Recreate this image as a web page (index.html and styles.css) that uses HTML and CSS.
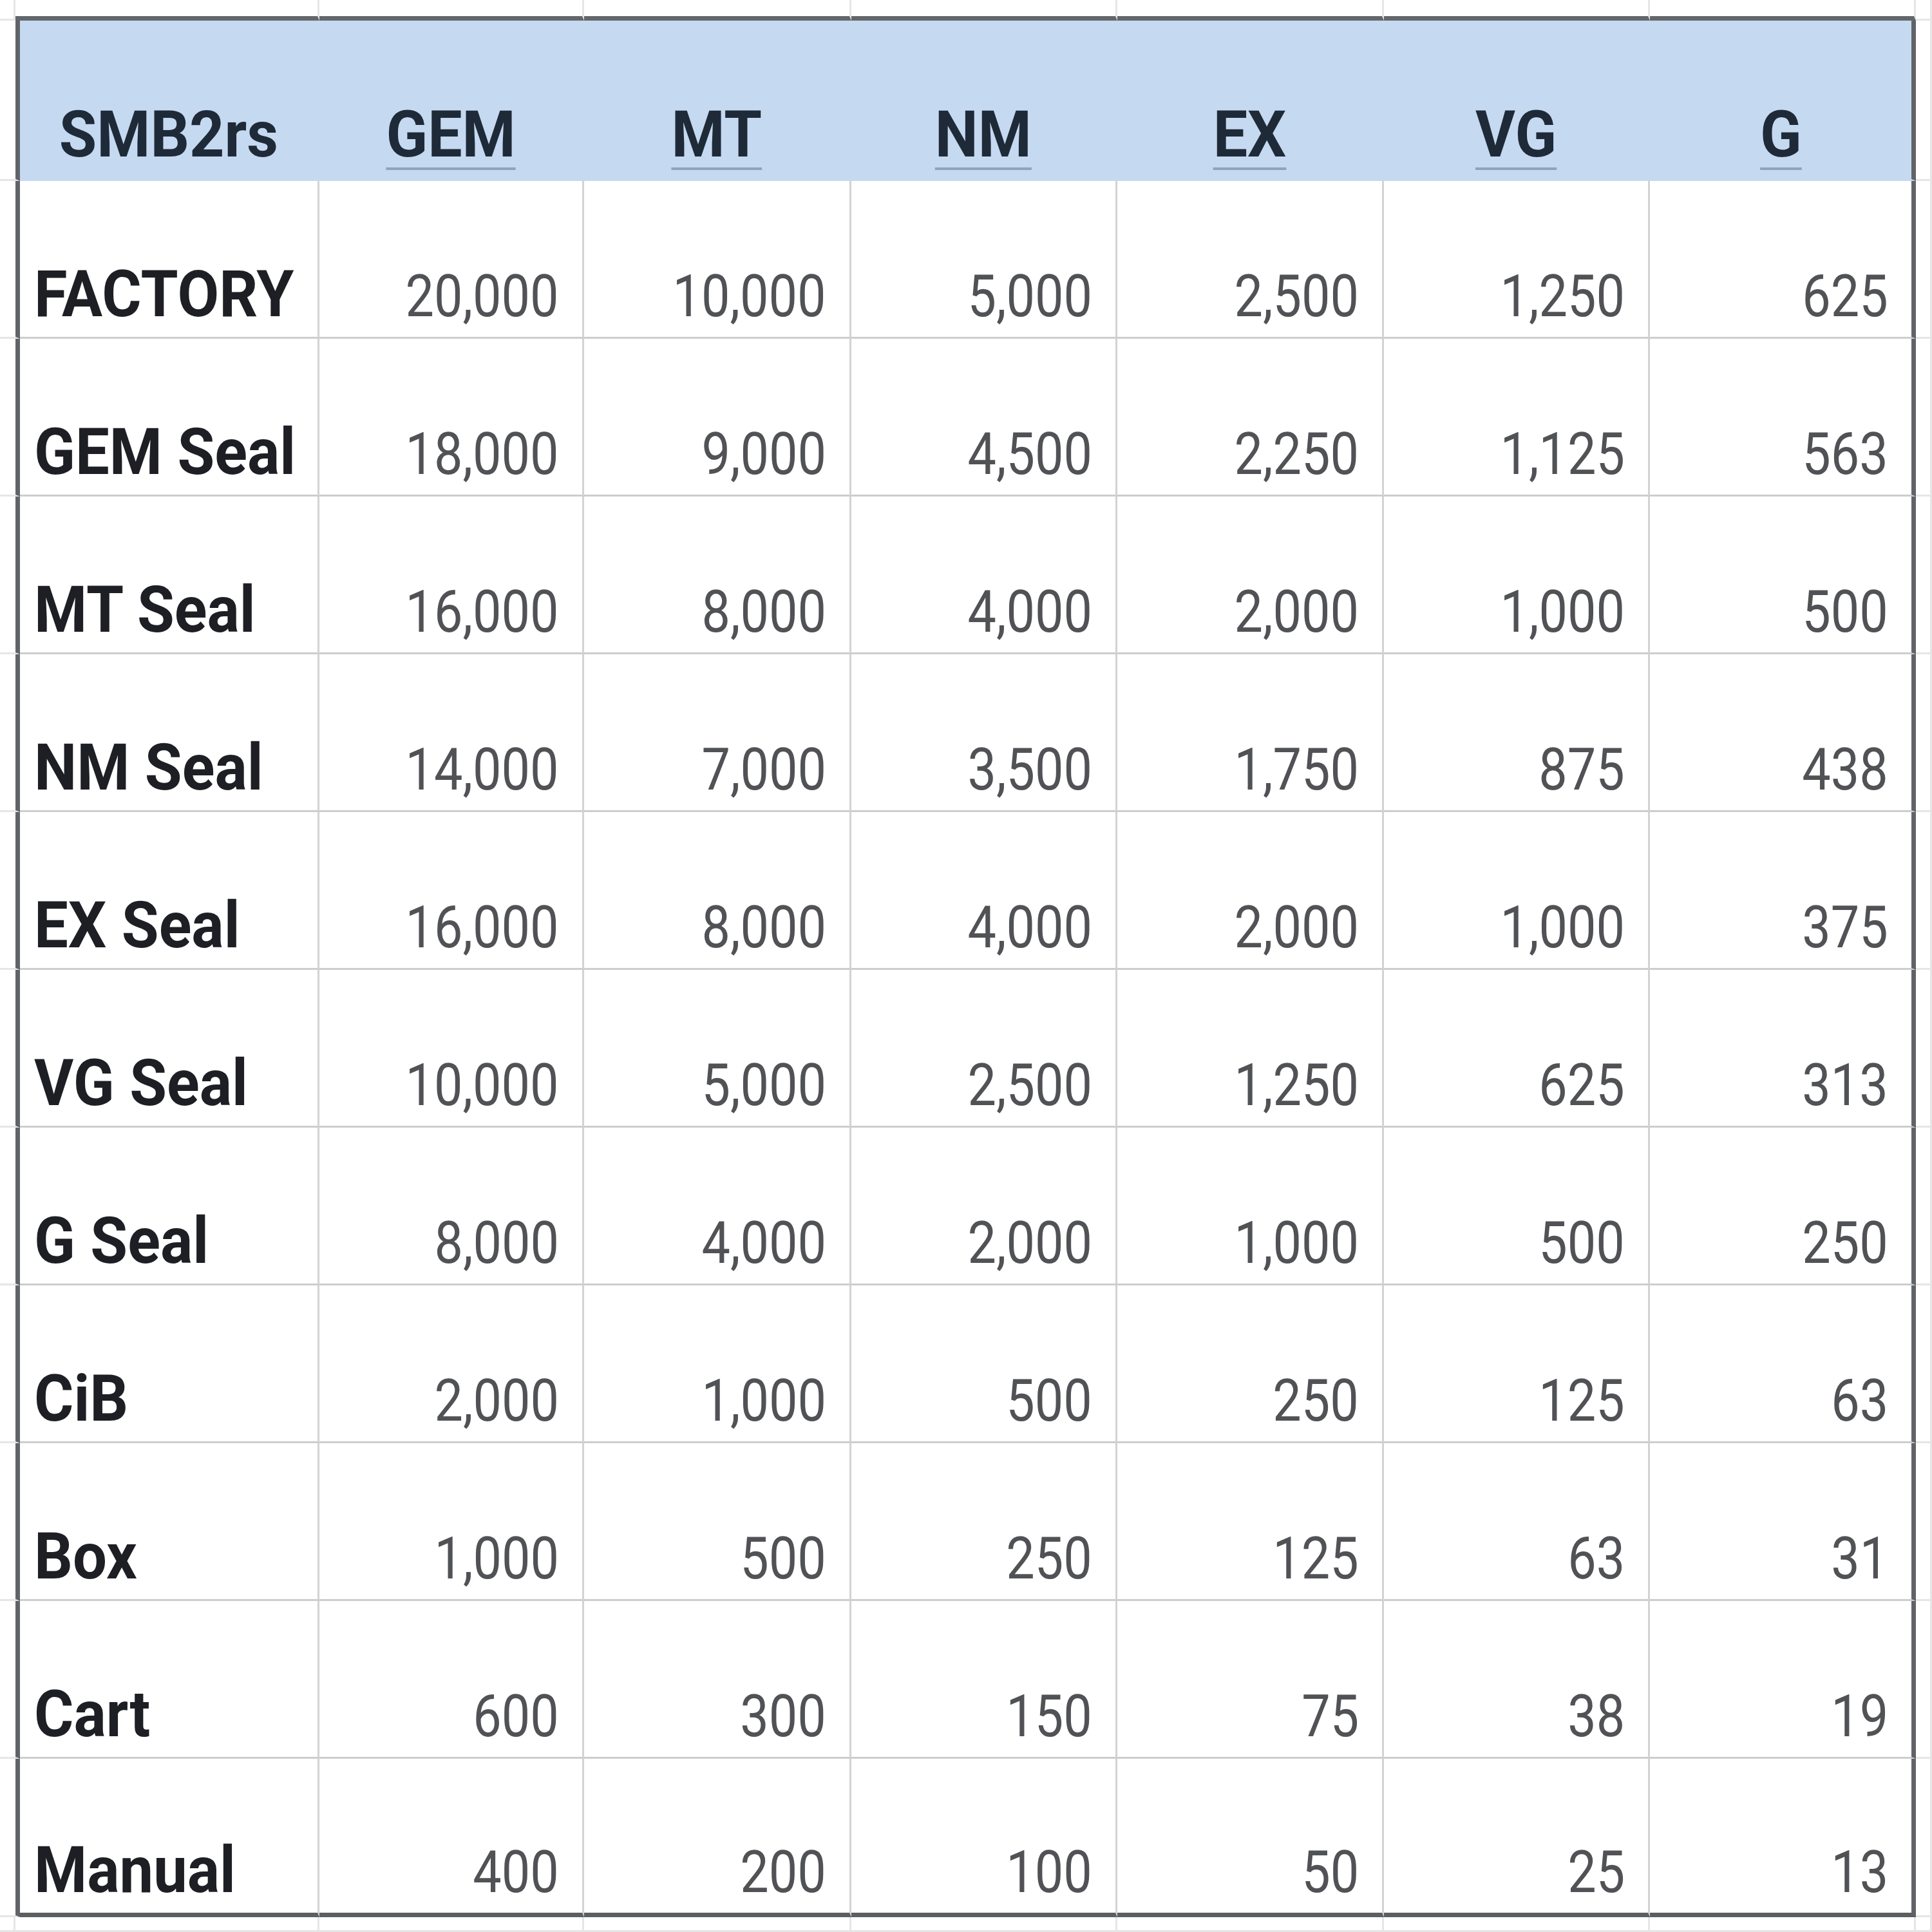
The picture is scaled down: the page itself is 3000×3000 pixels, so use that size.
FILE: index.html
```html
<!DOCTYPE html>
<html lang="en">
<head>
<meta charset="utf-8">
<title>SMB2rs price grid</title>
<link rel="stylesheet" href="styles.css">
</head>
<body>
<div class="sheet">
  <div class="row r-gtop">
    <div class="cell g gw0"></div>
    <div class="cell g gtop gw1"></div>
    <div class="cell g gtop w2"></div>
    <div class="cell g gtop w3"></div>
    <div class="cell g gtop w4"></div>
    <div class="cell g gtop w5"></div>
    <div class="cell g gtop w6"></div>
    <div class="cell g gtop w7"></div>
    <div class="cell g grest"></div>
  </div>

  <div class="row r-head">
    <div class="cell g gleft"></div>
    <div class="cell h w1"><span class="t">SMB2rs</span></div>
    <div class="cell h w2"><span class="t u">GEM</span></div>
    <div class="cell h w3"><span class="t u">MT</span></div>
    <div class="cell h w4"><span class="t u">NM</span></div>
    <div class="cell h w5"><span class="t u">EX</span></div>
    <div class="cell h w6"><span class="t u">VG</span></div>
    <div class="cell h w7 last"><span class="t u">G</span></div>
    <div class="cell g grest"></div>
  </div>

  <div class="row r-data">
    <div class="cell g gleft"></div>
    <div class="cell d w1 name"><span class="t">FACTORY</span></div>
    <div class="cell d w2 num"><span class="t">20,000</span></div>
    <div class="cell d w3 num"><span class="t">10,000</span></div>
    <div class="cell d w4 num"><span class="t">5,000</span></div>
    <div class="cell d w5 num"><span class="t">2,500</span></div>
    <div class="cell d w6 num"><span class="t">1,250</span></div>
    <div class="cell d w7 num last"><span class="t">625</span></div>
    <div class="cell g grest"></div>
  </div>

  <div class="row r-data">
    <div class="cell g gleft"></div>
    <div class="cell d w1 name"><span class="t">GEM Seal</span></div>
    <div class="cell d w2 num"><span class="t">18,000</span></div>
    <div class="cell d w3 num"><span class="t">9,000</span></div>
    <div class="cell d w4 num"><span class="t">4,500</span></div>
    <div class="cell d w5 num"><span class="t">2,250</span></div>
    <div class="cell d w6 num"><span class="t">1,125</span></div>
    <div class="cell d w7 num last"><span class="t">563</span></div>
    <div class="cell g grest"></div>
  </div>

  <div class="row r-data">
    <div class="cell g gleft"></div>
    <div class="cell d w1 name"><span class="t">MT Seal</span></div>
    <div class="cell d w2 num"><span class="t">16,000</span></div>
    <div class="cell d w3 num"><span class="t">8,000</span></div>
    <div class="cell d w4 num"><span class="t">4,000</span></div>
    <div class="cell d w5 num"><span class="t">2,000</span></div>
    <div class="cell d w6 num"><span class="t">1,000</span></div>
    <div class="cell d w7 num last"><span class="t">500</span></div>
    <div class="cell g grest"></div>
  </div>

  <div class="row r-data">
    <div class="cell g gleft"></div>
    <div class="cell d w1 name"><span class="t">NM Seal</span></div>
    <div class="cell d w2 num"><span class="t">14,000</span></div>
    <div class="cell d w3 num"><span class="t">7,000</span></div>
    <div class="cell d w4 num"><span class="t">3,500</span></div>
    <div class="cell d w5 num"><span class="t">1,750</span></div>
    <div class="cell d w6 num"><span class="t">875</span></div>
    <div class="cell d w7 num last"><span class="t">438</span></div>
    <div class="cell g grest"></div>
  </div>

  <div class="row r-data">
    <div class="cell g gleft"></div>
    <div class="cell d w1 name"><span class="t">EX Seal</span></div>
    <div class="cell d w2 num"><span class="t">16,000</span></div>
    <div class="cell d w3 num"><span class="t">8,000</span></div>
    <div class="cell d w4 num"><span class="t">4,000</span></div>
    <div class="cell d w5 num"><span class="t">2,000</span></div>
    <div class="cell d w6 num"><span class="t">1,000</span></div>
    <div class="cell d w7 num last"><span class="t">375</span></div>
    <div class="cell g grest"></div>
  </div>

  <div class="row r-data">
    <div class="cell g gleft"></div>
    <div class="cell d w1 name"><span class="t">VG Seal</span></div>
    <div class="cell d w2 num"><span class="t">10,000</span></div>
    <div class="cell d w3 num"><span class="t">5,000</span></div>
    <div class="cell d w4 num"><span class="t">2,500</span></div>
    <div class="cell d w5 num"><span class="t">1,250</span></div>
    <div class="cell d w6 num"><span class="t">625</span></div>
    <div class="cell d w7 num last"><span class="t">313</span></div>
    <div class="cell g grest"></div>
  </div>

  <div class="row r-data">
    <div class="cell g gleft"></div>
    <div class="cell d w1 name"><span class="t">G Seal</span></div>
    <div class="cell d w2 num"><span class="t">8,000</span></div>
    <div class="cell d w3 num"><span class="t">4,000</span></div>
    <div class="cell d w4 num"><span class="t">2,000</span></div>
    <div class="cell d w5 num"><span class="t">1,000</span></div>
    <div class="cell d w6 num"><span class="t">500</span></div>
    <div class="cell d w7 num last"><span class="t">250</span></div>
    <div class="cell g grest"></div>
  </div>

  <div class="row r-data">
    <div class="cell g gleft"></div>
    <div class="cell d w1 name"><span class="t">CiB</span></div>
    <div class="cell d w2 num"><span class="t">2,000</span></div>
    <div class="cell d w3 num"><span class="t">1,000</span></div>
    <div class="cell d w4 num"><span class="t">500</span></div>
    <div class="cell d w5 num"><span class="t">250</span></div>
    <div class="cell d w6 num"><span class="t">125</span></div>
    <div class="cell d w7 num last"><span class="t">63</span></div>
    <div class="cell g grest"></div>
  </div>

  <div class="row r-data">
    <div class="cell g gleft"></div>
    <div class="cell d w1 name"><span class="t">Box</span></div>
    <div class="cell d w2 num"><span class="t">1,000</span></div>
    <div class="cell d w3 num"><span class="t">500</span></div>
    <div class="cell d w4 num"><span class="t">250</span></div>
    <div class="cell d w5 num"><span class="t">125</span></div>
    <div class="cell d w6 num"><span class="t">63</span></div>
    <div class="cell d w7 num last"><span class="t">31</span></div>
    <div class="cell g grest"></div>
  </div>

  <div class="row r-data">
    <div class="cell g gleft"></div>
    <div class="cell d w1 name"><span class="t">Cart</span></div>
    <div class="cell d w2 num"><span class="t">600</span></div>
    <div class="cell d w3 num"><span class="t">300</span></div>
    <div class="cell d w4 num"><span class="t">150</span></div>
    <div class="cell d w5 num"><span class="t">75</span></div>
    <div class="cell d w6 num"><span class="t">38</span></div>
    <div class="cell d w7 num last"><span class="t">19</span></div>
    <div class="cell g grest"></div>
  </div>

  <div class="row r-data r-lastdata">
    <div class="cell g gleft"></div>
    <div class="cell d w1 name"><span class="t">Manual</span></div>
    <div class="cell d w2 num"><span class="t">400</span></div>
    <div class="cell d w3 num"><span class="t">200</span></div>
    <div class="cell d w4 num"><span class="t">100</span></div>
    <div class="cell d w5 num"><span class="t">50</span></div>
    <div class="cell d w6 num"><span class="t">25</span></div>
    <div class="cell d w7 num last"><span class="t">13</span></div>
    <div class="cell g grest"></div>
  </div>

  <div class="row r-gbot">
    <div class="cell g gw0"></div>
    <div class="cell g gw1"></div>
    <div class="cell g w2"></div>
    <div class="cell g w3"></div>
    <div class="cell g w4"></div>
    <div class="cell g w5"></div>
    <div class="cell g w6"></div>
    <div class="cell g w7"></div>
    <div class="cell g grest"></div>
  </div>
</div>
</body>
</html>
```

FILE: styles.css
```css
html, body {
  margin: 0;
  padding: 0;
  background: #ffffff;
}

.sheet {
  width: 3000px;
  height: 3000px;
  overflow: hidden;
  display: flex;
  flex-direction: column;
  font-family: "Roboto", "Liberation Sans", sans-serif;
}

.row {
  display: flex;
  flex: none;
}

.r-gtop { height: 32px; }
.r-head { height: 249px; }
.r-data { height: 245px; }
.r-lastdata { height: 246px; }
.r-gbot { flex: 1; }

.cell {
  box-sizing: border-box;
  flex: none;
  height: 100%;
  border-right: 3px solid #d3d3d3;
  border-bottom: 3px solid #cdcdcd;
  display: flex;
  align-items: flex-end;
  line-height: 1;
  white-space: nowrap;
}

.t {
  display: inline-block;
}

/* column widths */
.gw0 { width: 24px; }
.gw1 { width: 472px; }
.gleft { width: 31px; }
.w1 { width: 465px; }
.w2 { width: 411px; }
.w3 { width: 415px; }
.w4 { width: 413px; }
.w5 { width: 414px; }
.w6 { width: 413px; }
.w7 { width: 413px; }
.grest { flex: 1; }

/* faint spreadsheet grid outside the table */
.g {
  border-right-color: #e6e6e6;
  border-bottom-color: #e6e6e6;
}
.gtop {
  border-bottom: 7px solid #62676c;
}
.gleft {
  border-right: 7px solid #606468;
}

/* thick outline of the table */
.last { border-right: 7px solid #606468; }
.r-lastdata .d { border-bottom: 7px solid #5c5f62; }

/* header */
.h {
  background: #c5d9f1;
  border-right-color: transparent;
  border-bottom-color: transparent;
  justify-content: center;
  padding-bottom: 19px;
  font-weight: 700;
  font-size: 101px;
  color: #1f2a38;
}
.h .t {
  transform: scaleX(0.94);
  transform-origin: center bottom;
}
.h.last { border-right-color: #606468; }

.u {
  text-decoration: underline;
  text-decoration-color: rgba(95, 108, 128, 0.5);
  text-decoration-thickness: 4px;
  text-underline-offset: 17px;
}

/* body cells */
.name {
  justify-content: flex-start;
  padding-left: 22px;
  padding-bottom: 16px;
  font-weight: 700;
  font-size: 101px;
  color: #1d1f24;
}
.name .t {
  transform: scaleX(0.93);
  transform-origin: left bottom;
}

.num {
  justify-content: flex-end;
  padding-right: 36px;
  padding-bottom: 17px;
  font-size: 90px;
  color: #505255;
}
.num .t {
  transform: scaleX(0.88);
  transform-origin: right bottom;
}
```
